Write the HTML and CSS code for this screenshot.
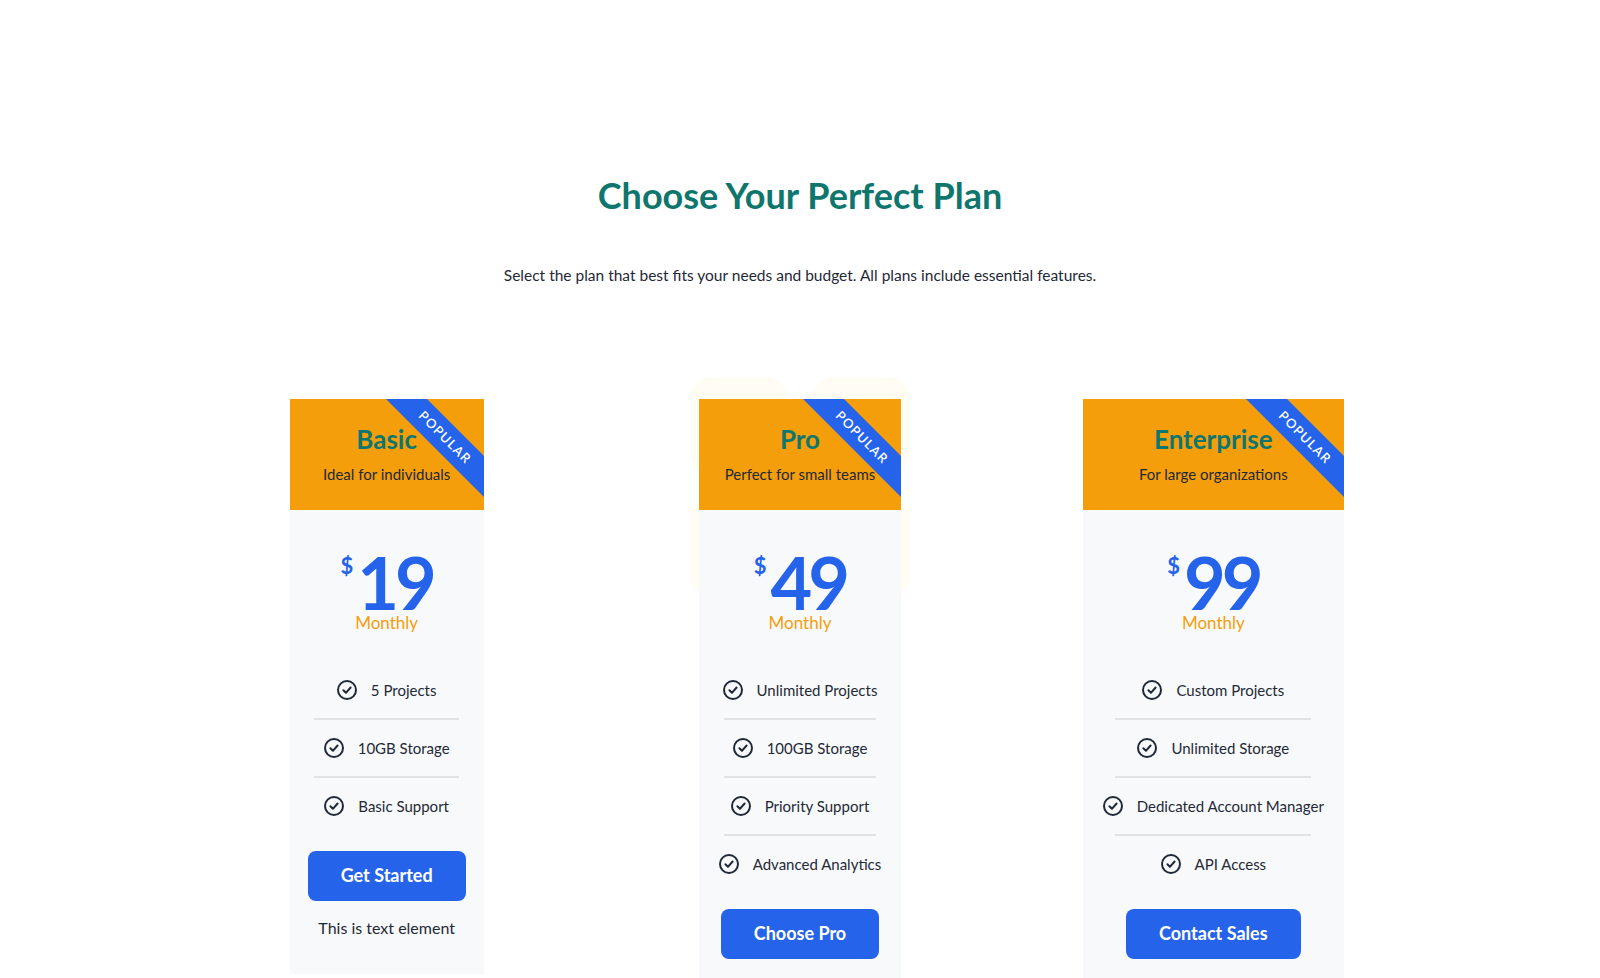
FILE: index.html
```html
<!doctype html>
<html>
<head>
  <meta charset="utf-8">
  <link rel="stylesheet" href="styles.css">
</head>
<body>
  <div class="page">
    <h1 class="title">Choose Your Perfect Plan</h1>
    <p class="lead">Select the plan that best fits your needs and budget. All plans include essential features.</p>

    <div class="plans">

      <div class="card">
        <div class="card-head">
          <h2>Basic</h2>
          <p>Ideal for individuals</p>
          <div class="ribbon">POPULAR</div>
        </div>
        <div class="card-body">
          <div class="price"><span class="cur">$</span><span class="amount">19</span></div>
          <div class="period">Monthly</div>
          <ul class="features">
            <li><svg viewBox="2 2 20 20"><circle cx="12" cy="12" r="9"/><path d="M8.4 12.3l2.5 2.5 4.7-5.3"/></svg>5 Projects</li>
            <li><svg viewBox="2 2 20 20"><circle cx="12" cy="12" r="9"/><path d="M8.4 12.3l2.5 2.5 4.7-5.3"/></svg>10GB Storage</li>
            <li><svg viewBox="2 2 20 20"><circle cx="12" cy="12" r="9"/><path d="M8.4 12.3l2.5 2.5 4.7-5.3"/></svg>Basic Support</li>
          </ul>
          <div class="actions"><button class="btn">Get Started</button></div>
          <p class="note">This is text element</p>
        </div>
      </div>

      <div class="card">
        <div class="tiles"><span></span><span></span><span></span><span></span></div>
        <div class="card-head">
          <h2>Pro</h2>
          <p>Perfect for small teams</p>
          <div class="ribbon">POPULAR</div>
        </div>
        <div class="card-body">
          <div class="price"><span class="cur">$</span><span class="amount">49</span></div>
          <div class="period">Monthly</div>
          <ul class="features">
            <li><svg viewBox="2 2 20 20"><circle cx="12" cy="12" r="9"/><path d="M8.4 12.3l2.5 2.5 4.7-5.3"/></svg>Unlimited Projects</li>
            <li><svg viewBox="2 2 20 20"><circle cx="12" cy="12" r="9"/><path d="M8.4 12.3l2.5 2.5 4.7-5.3"/></svg>100GB Storage</li>
            <li><svg viewBox="2 2 20 20"><circle cx="12" cy="12" r="9"/><path d="M8.4 12.3l2.5 2.5 4.7-5.3"/></svg>Priority Support</li>
            <li><svg viewBox="2 2 20 20"><circle cx="12" cy="12" r="9"/><path d="M8.4 12.3l2.5 2.5 4.7-5.3"/></svg>Advanced Analytics</li>
          </ul>
          <div class="actions"><button class="btn">Choose Pro</button></div>
        </div>
      </div>

      <div class="card">
        <div class="card-head">
          <h2>Enterprise</h2>
          <p>For large organizations</p>
          <div class="ribbon">POPULAR</div>
        </div>
        <div class="card-body">
          <div class="price"><span class="cur">$</span><span class="amount">99</span></div>
          <div class="period">Monthly</div>
          <ul class="features">
            <li><svg viewBox="2 2 20 20"><circle cx="12" cy="12" r="9"/><path d="M8.4 12.3l2.5 2.5 4.7-5.3"/></svg>Custom Projects</li>
            <li><svg viewBox="2 2 20 20"><circle cx="12" cy="12" r="9"/><path d="M8.4 12.3l2.5 2.5 4.7-5.3"/></svg>Unlimited Storage</li>
            <li><svg viewBox="2 2 20 20"><circle cx="12" cy="12" r="9"/><path d="M8.4 12.3l2.5 2.5 4.7-5.3"/></svg>Dedicated Account Manager</li>
            <li><svg viewBox="2 2 20 20"><circle cx="12" cy="12" r="9"/><path d="M8.4 12.3l2.5 2.5 4.7-5.3"/></svg>API Access</li>
          </ul>
          <div class="actions"><button class="btn">Contact Sales</button></div>
        </div>
      </div>

    </div>
  </div>
</body>
</html>
```

FILE: styles.css
```css
body {
  margin: 0;
  background: #ffffff;
  font-family: Lato, "Noto Sans", sans-serif;
  color: #1f2937;
}

.page {
  padding-top: 174px;
  text-align: center;
}

.title {
  margin: 0;
  font-size: 36px;
  line-height: 1.2;
  font-weight: 700;
  color: #0f766e;
}

.lead {
  margin: 46px 0 0;
  font-size: 15.5px;
  line-height: 24px;
  color: #1f2937;
}

.plans {
  max-width: 1200px;
  margin: 112px auto 0;
  display: grid;
  grid-template-columns: repeat(3, 1fr);
  gap: 40px;
  justify-items: center;
  align-items: start;
}

.card {
  position: relative;
  background: #f8f9fa;
}

/* faint tiles peeking out behind the middle card */
.tiles {
  position: absolute;
  z-index: -1;
  top: -22px;
  left: 50%;
  width: 220px;
  height: 220px;
  margin-left: -110px;
  display: grid;
  grid-template-columns: 1fr 1fr;
  grid-template-rows: 1fr 1fr;
  gap: 24px;
}

.tiles span {
  background: #fffcf4;
  border-radius: 22px;
}

.card-head {
  position: relative;
  overflow: hidden;
  background: #f49e0c;
  padding: 25px 18px 25px;
}

.card-head h2 {
  margin: 0;
  font-size: 26px;
  line-height: 30px;
  font-weight: 700;
  color: #0f766e;
}

.card-head p {
  margin: 9px 0 0;
  font-size: 15px;
  line-height: 22px;
  color: #1f2937;
}

.ribbon {
  position: absolute;
  top: 24px;
  right: -36px;
  width: 150px;
  padding: 6px 0;
  line-height: 17px;
  font-size: 13px;
  font-weight: 600;
  letter-spacing: 1.2px;
  color: #ffffff;
  background: #2563eb;
  text-align: center;
  transform: rotate(45deg);
}

.card-body {
  padding: 42px 0 34px;
}

.price {
  display: flex;
  justify-content: center;
  align-items: flex-start;
  color: #2563eb;
  font-weight: 700;
}

.cur {
  font-size: 22px;
  line-height: 1;
  margin-top: 3px;
  margin-right: 4px;
}

.amount {
  font-size: 72px;
  line-height: 0.85;
  letter-spacing: -4px;
}

.period {
  font-size: 17px;
  line-height: 1.2;
  color: #f59e0b;
}

.features {
  list-style: none;
  margin: 28px 0 0;
  padding: 0;
}

.features li {
  position: relative;
  display: flex;
  justify-content: center;
  align-items: center;
  white-space: nowrap;
  padding: 16px 20px 18px;
  font-size: 15px;
  line-height: 24px;
}

.features li::after {
  content: "";
  position: absolute;
  left: 12.5%;
  right: 12.5%;
  bottom: 0;
  height: 2px;
  background: #e1e2e3;
}

.features li:last-child {
  padding-bottom: 16px;
}

.features li:last-child::after {
  display: none;
}

.features svg {
  width: 20px;
  height: 20px;
  margin-right: 14px;
  fill: none;
  stroke: #1f2937;
  stroke-width: 2;
  stroke-linecap: round;
  stroke-linejoin: round;
}

.actions {
  margin-top: 17px;
  padding: 0 18px;
}

.btn {
  font-family: inherit;
  font-size: 18px;
  font-weight: 700;
  line-height: 24px;
  color: #ffffff;
  background: #2563eb;
  border: none;
  border-radius: 8px;
  padding: 12px 33px 14px;
}

.note {
  margin: 15px 0 0;
  padding: 0 18px;
  font-size: 16px;
  line-height: 24px;
}
```
